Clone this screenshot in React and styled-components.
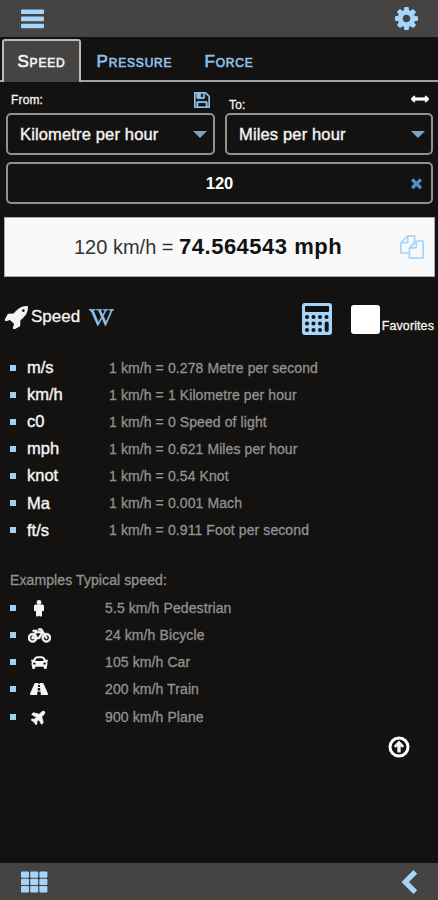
import styled, { createGlobalStyle } from "styled-components";
import {
  FaBicycle,
  FaCar,
  FaPlane,
  FaRoad,
  FaWikipediaW,
} from "react-icons/fa";

const GlobalStyle = createGlobalStyle`
  * {
    box-sizing: border-box;
  }
  body {
    margin: 0;
    background: #131210;
    color: #f4f4f4;
    font-family: "Liberation Sans", Arial, sans-serif;
  }
`;

const Container = styled.div`
  display: flex;
  flex-direction: column;
  height: 900px;
  width: 438px;
  overflow: hidden;
`;

const Bar = styled.div`
  display: flex;
  align-items: center;
  justify-content: space-between;
  flex-shrink: 0;
  height: ${(props) => props.height}px;
  padding: ${(props) => props.pad};
  background: #454442;
  color: #a5d5fa;
`;

const Icon = styled.svg`
  display: block;
  flex-shrink: 0;
  width: ${(props) => props.w}px;
  height: ${(props) => props.h || props.w}px;
  fill: currentColor;
`;

const Tabs = styled.div`
  display: flex;
  height: 46px;
  padding: 2px 0 0 2px;
  flex-shrink: 0;
  background: linear-gradient(#a3a29f, #a3a29f) 0 43px / 100% 2px no-repeat;
`;

const Tab = styled.div`
  display: flex;
  align-items: center;
  justify-content: center;
  width: ${(props) => props.width}px;
  height: 43px;
  border: 2px solid ${(props) => (props.$active ? "#bab9b6" : "transparent")};
  border-bottom: none;
  border-radius: 3px 3px 0 0;
  background: ${(props) => (props.$active ? "#454442" : "transparent")};
  color: ${(props) => (props.$active ? "#f4f4f4" : "#8fc3ee")};
  font-size: 17px;
  font-variant: small-caps;
  letter-spacing: 0.8px;
  -webkit-text-stroke: 0.6px;
`;

const Units = styled.div`
  display: flex;
  gap: 10px;
  padding: 0 5px 0 6px;
`;

const Unit = styled.div`
  width: ${(props) => props.width}px;
`;

const Label = styled.div`
  display: flex;
  justify-content: space-between;
  height: 30px;
  padding: ${(props) => props.pad};
  font-size: 12px;
  line-height: 14px;
  letter-spacing: 0.15px;
  -webkit-text-stroke: 0.3px;
`;

const LabelIcon = styled.div`
  margin-top: ${(props) => props.top}px;
  color: ${(props) => props.color};
`;

const Select = styled.div`
  display: flex;
  align-items: center;
  justify-content: space-between;
  height: 42px;
  padding: 0 6px 0 12px;
  border: 2px solid #92918e;
  border-radius: 5px;
  font-size: 16.5px;
  letter-spacing: 0.15px;
  -webkit-text-stroke: 0.4px;
`;

const Caret = styled.div`
  border: 7px solid transparent;
  border-top: 7px solid #7ba4c5;
  border-bottom: none;
`;

const Input = styled.div`
  display: flex;
  align-items: center;
  height: 42px;
  margin: 7px 5px 0 6px;
  padding: 0 9px 0 20px;
  border: 2px solid #92918e;
  border-radius: 5px;
  color: #4c8fca;
`;

const Value = styled.div`
  flex: 1;
  text-align: center;
  color: #fff;
  font-size: 16.5px;
  font-weight: bold;
`;

const Result = styled.div`
  display: flex;
  align-items: center;
  height: 60px;
  margin: 13px 3px 0 4px;
  padding: 0 10px 0 69px;
  border: 1px solid #a8a8a6;
  background: #f9f9f9;
  color: #333;
  font-size: 20px;
  white-space: pre;
`;

const ResultValue = styled.b`
  flex: 1;
  color: #111;
  font-size: 22px;
  letter-spacing: 0.5px;
`;

const Heading = styled.div`
  display: flex;
  align-items: center;
  height: 42px;
  margin-top: 19px;
  padding: 0 4px 0 5px;
  font-size: 17px;
`;

const HeadingText = styled.div`
  margin: 0 9px 0 3px;
  -webkit-text-stroke: 0.3px;
`;

const HeadingTools = styled.div`
  display: flex;
  align-items: center;
  margin: 4px 0 0 auto;
  color: #a5d5fa;
`;

const Checkbox = styled.div`
  width: 29px;
  height: 29px;
  margin: 0 2px 0 19px;
  border-radius: 3px;
  background: #fff;
`;

const Favorites = styled.div`
  margin-top: 13px;
  color: #f4f4f4;
  font-size: 12.5px;
  letter-spacing: 0.1px;
  -webkit-text-stroke: 0.3px;
`;

const List = styled.ul`
  margin: ${(props) => props.top}px 0 0;
  padding: 0 0 0 10px;
  list-style: none;
`;

const ListItem = styled.li`
  display: flex;
  align-items: center;
  height: 27.1px;
`;

const Bullet = styled.span`
  width: 6px;
  height: 6px;
  margin-right: 11px;
  background: #9ed0f4;
`;

const Symbol = styled.div`
  display: flex;
  width: ${(props) => props.width}px;
  font-size: 16.5px;
  -webkit-text-stroke: 0.4px;
`;

const Desc = styled.div`
  color: #929190;
  font-size: 14px;
  letter-spacing: 0.1px;
  -webkit-text-stroke: 0.3px;
  white-space: nowrap;
`;

const Examples = styled(Desc)`
  height: 16px;
  line-height: 16px;
  margin: 28px 0 0 10px;
`;

const Vehicle = styled.div`
  display: flex;
  justify-content: center;
  width: 24px;
  margin-right: 54px;
`;

const Plane = styled(FaPlane)`
  transform: rotate(-45deg);
`;

const Top = styled.div`
  display: flex;
  justify-content: flex-end;
  margin: 6px 28px auto 0;
`;

const Pedestrian = () => (
  <Icon w={12} h={17} viewBox="0 0 12 17">
    <circle cx="6" cy="2.4" r="2.4" />
    <path d="M2.6 4.4h6.8q1.6 0 1.6 1.6v4.200q0 1-1 1t-1-.8v5q0 1.200-1.400 1.200T6 15.500q-.2 1.100-1.600 1.100T3 15.400v-5q0 .800-1 .800t-1-1V6q0-1.600 1.600-1.600z" />
  </Icon>
);

const conversions = [
  ["m/s", "0.278 Metre per second"],
  ["km/h", "1 Kilometre per hour"],
  ["c0", "0 Speed of light"],
  ["mph", "0.621 Miles per hour"],
  ["knot", "0.54 Knot"],
  ["Ma", "0.001 Mach"],
  ["ft/s", "0.911 Foot per second"],
];

const examples = [
  [<Pedestrian />, "5.5 km/h Pedestrian"],
  [<FaBicycle size={23} stroke="#fff" strokeWidth="18" />, "24 km/h Bicycle"],
  [<FaCar size={17} />, "105 km/h Car"],
  [<FaRoad size={18} />, "200 km/h Train"],
  [<Plane size={16} stroke="#fff" strokeWidth="20" />, "900 km/h Plane"],
];

const keys = [
  [5, 14],
  [11.5, 14],
  [18, 14],
  [24.5, 14],
  [5, 20.5],
  [11.5, 20.5],
  [18, 20.5],
  [5, 27],
  [11.5, 27],
  [18, 27],
];

const App = () => {
  return (
    <Container>
      <GlobalStyle />
      <Bar height={37} pad="0 20px 0 21px">
        <Icon w={23} h={20} viewBox="0 0 23 20">
          <rect y="0.5" width="23" height="4.6" rx="1" />
          <rect y="7.6" width="23" height="4.6" rx="1" />
          <rect y="14.7" width="23" height="4.6" rx="1" />
        </Icon>
        <Icon w={23} viewBox="128 128 1536 1536">
          <path d="M1152 896q0-106-75-181t-181-75-181 75-75 181 75 181 181 75 181-75 75-181zm512-109v222q0 12-8 23t-20 13l-185 28q-19 54-39 91 35 50 107 138 10 12 10 25t-9 23q-27 37-99 108t-94 71q-12 0-26-9l-138-108q-44 23-91 38-16 136-29 186-7 28-36 28h-222q-14 0-24.5-8.5t-11.5-21.5l-28-184q-49-16-90-37l-141 107q-10 9-25 9-14 0-25-11-126-114-165-168-7-10-7-23 0-12 8-23 15-21 51-66.5t54-70.5q-27-50-41-99l-183-27q-13-2-21-12.5t-8-23.5v-222q0-12 8-23t19-13l186-28q14-46 39-92-40-57-107-138-10-12-10-24 0-10 9-23 26-36 98.5-107.5t94.5-71.5q13 0 26 10l138 107q44-23 91-38 16-136 29-186 7-28 36-28h222q14 0 24.5 8.5t11.5 21.5l28 184q49 16 90 37l142-107q9-9 24-9 13 0 25 10 129 119 165 170 7 8 7 22 0 12-8 23-15 21-51 66.5t-54 70.5q26 50 41 98l183 28q13 2 21 12.5t8 23.5z" />
        </Icon>
      </Bar>
      <Tabs>
        <Tab $active width={79}>
          Speed
        </Tab>
        <Tab width={107}>Pressure</Tab>
        <Tab width={82}>Force</Tab>
      </Tabs>
      <Units>
        <Unit width={209}>
          <Label pad="10px 5px 0 5px">
            From:
            <LabelIcon top={-1} color="#8fc3ee">
              <Icon w={16} viewBox="128 128 1536 1536" stroke="#8fc3ee" strokeWidth="60">
                <path d="M512 1536h768v-384h-768v384zm896 0h128v-896q0-14-10-38.5t-20-34.5l-281-281q-10-10-34-20t-39-10v416q0 40-28 68t-68 28h-576q-40 0-68-28t-28-68v-416h-128v1280h128v-416q0-40 28-68t68-28h832q40 0 68 28t28 68v416zm-384-928v-320q0-13-9.5-22.5t-22.5-9.5h-192q-13 0-22.5 9.5t-9.5 22.5v320q0 13 9.5 22.5t22.5 9.5h192q13 0 22.5-9.5t9.5-22.5zm640 32v928q0 40-28 68t-68 28h-1344q-40 0-68-28t-28-68v-1344q0-40 28-68t68-28h928q40 0 88 20t76 48l280 280q28 28 48 76t20 88z" />
              </Icon>
            </LabelIcon>
          </Label>
          <Select>
            Kilometre per hour
            <Caret />
          </Select>
        </Unit>
        <Unit width={208}>
          <Label pad="15px 4px 0 4px">
            To:
            <LabelIcon top={-8} color="#fff">
              <Icon w={18} h={18} viewBox="0 0 1792 1792" stroke="#fff" strokeWidth="60">
                <path d="M1792 896q0 26-19 45l-256 256q-19 19-45 19t-45-19-19-45v-128h-1024v128q0 26-19 45t-45 19-45-19l-256-256q-19-19-19-45t19-45l256-256q19-19 45-19t45 19 19 45v128h1024v-128q0-26 19-45t45-19 45 19l256 256q19 19 19 45z" />
              </Icon>
            </LabelIcon>
          </Label>
          <Select>
            Miles per hour
            <Caret />
          </Select>
        </Unit>
      </Units>
      <Input>
        <Value>120</Value>
        <Icon w={11} viewBox="302 302 1188 1252">
          <path d="M1490 1322q0 40-28 68l-136 136q-28 28-68 28t-68-28l-294-294-294 294q-28 28-68 28t-68-28l-136-136q-28-28-28-68t28-68l294-294-294-294q-28-28-28-68t28-68l136-136q28-28 68-28t68 28l294 294 294-294q28-28 68-28t68 28l136 136q28 28 28 68t-28 68l-294 294 294 294q28 28 28 68z" />
        </Icon>
      </Input>
      <Result>
        {"120 km/h = "}
        <ResultValue>74.564543 mph</ResultValue>
        <Icon w={24} viewBox="0 0 1792 1792" color="#a5d5fa">
          <path d="M1696 384q40 0 68 28t28 68v1216q0 40-28 68t-68 28h-960q-40 0-68-28t-28-68v-288h-544q-40 0-68-28t-28-68v-672q0-40 20-88t48-76l408-408q28-28 76-48t88-20h416q40 0 68 28t28 68v328q68-40 128-40h416zm-544 213l-299 299h299v-299zm-640-384l-299 299h299v-299zm196 647l316-316v-416h-384v416q0 40-28 68t-68 28h-416v640h512v-256q0-40 20-88t48-76zm956 804v-1152h-384v416q0 40-28 68t-68 28h-416v640h896z" />
        </Icon>
      </Result>
      <Heading>
        <Icon w={23} viewBox="64 128 1600 1600">
          <path d="M1440 448q0-40-28-68t-68-28-68 28-28 68 28 68 68 28 68-28 28-68zm224-288q0 249-75.5 430.5t-253.5 360.5q-81 80-195 176l-20 379q-2 16-16 26l-384 224q-7 4-16 4-12 0-23-9l-64-64q-13-14-8-32l85-276-281-281-276 85q-3 1-9 1-14 0-23-9l-64-64q-17-19-5-39l224-384q10-14 26-16l379-20q96-114 176-195 188-187 358-258t431-71q14 0 24 9.5t10 22.5z" />
        </Icon>
        <HeadingText>Speed</HeadingText>
        <FaWikipediaW size={25} color="#8fc3ee" stroke="#8fc3ee" strokeWidth="16" />
        <HeadingTools>
          <Icon w={30} h={32} viewBox="0 0 30 32">
            <rect width="30" height="32" rx="3" />
            <rect x="3" y="3" width="24" height="6" rx="1" fill="#131210" />
            {keys.map(([x, y]) => (
              <circle key={`${x}-${y}`} cx={x} cy={y} r="2" fill="#131210" />
            ))}
            <rect x="22.7" y="18.5" width="4" height="10.5" rx="2" fill="#131210" />
          </Icon>
          <Checkbox />
          <Favorites>Favorites</Favorites>
        </HeadingTools>
      </Heading>
      <List top={16}>
        {conversions.map(([symbol, text]) => (
          <ListItem key={symbol}>
            <Bullet />
            <Symbol width={82}>{symbol}</Symbol>
            <Desc>1 km/h = {text}</Desc>
          </ListItem>
        ))}
      </List>
      <Examples>Examples Typical speed:</Examples>
      <List top={7}>
        {examples.map(([icon, text]) => (
          <ListItem key={text}>
            <Bullet />
            <Vehicle>{icon}</Vehicle>
            <Desc>{text}</Desc>
          </ListItem>
        ))}
      </List>
      <Top>
        <Icon w={22} viewBox="0 0 22 22">
          <circle cx="11" cy="11" r="9" fill="none" stroke="#fff" strokeWidth="3" />
          <path d="M11 4.500l5.200 5.500-1.800 1.800-1.700-1.500v6.100H9.300v-6.100l-1.700 1.500L5.800 10z" />
        </Icon>
      </Top>
      <Bar height={37} pad="0 20px 0 21px">
        <Icon w={27} h={22} viewBox="0 0 27 22">
          {[0, 9.2, 18.4].map((x) =>
            [0.5, 7.8, 15.1].map((y) => (
              <rect key={`${x}-${y}`} x={x} y={y} width="8" height="6.3" rx="1.2" />
            ))
          )}
        </Icon>
        <Icon w={17} h={24} viewBox="0 0 17 24">
          <path d="M0.5 12L12.5 0l3.7 3.7L8 12l8.2 8.3-3.7 3.7z" />
        </Icon>
      </Bar>
    </Container>
  );
};

export default App;
